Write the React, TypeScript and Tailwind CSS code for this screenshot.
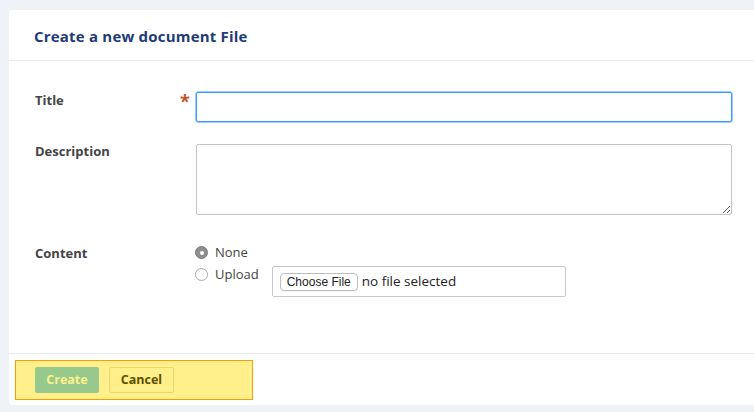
export default function App() {
  return (
    <div className="min-h-[412px] bg-[#eff3f8] pt-[10px] pl-[9px] pb-[7px] font-['Open_Sans',sans-serif]">
      <div className="bg-white rounded-tl-[4px] rounded-bl-[4px] h-[395px] flex flex-col">
        <div className="h-[51px] border-b border-[#e9ecef] flex items-center pl-[25px] pt-[3px]">
          <h1 className="text-[15px] font-bold text-[#1e3a78] tracking-[0.2px]">
            Create a new document File
          </h1>
        </div>

        <div className="flex-1 pt-[31px] pl-[26px] pr-[22px]">
          <div className="flex">
            <label className="w-[145px] -mt-[1px] text-[13px] font-bold text-[#444]">Title</label>
            <div className="w-[16px] text-[#c4531f] text-[18px] font-bold leading-none">*</div>
            <input
              autoFocus
              className="flex-1 h-[30px] border border-[#3d9bff] rounded-[2px] outline-none px-[6px] text-[13px] shadow-[0_0_0_0.5px_#3d9bff]"
            />
          </div>

          <div className="flex mt-[22px]">
            <label className="w-[161px] -mt-[2px] text-[13px] font-bold text-[#444]">Description</label>
            <textarea className="flex-1 h-[71px] border border-[#c4c4c4] rounded-[2px] outline-none px-[6px] text-[13px]" />
          </div>

          <div className="flex mt-[29px]">
            <label className="w-[160px] text-[13px] font-bold text-[#444]">Content</label>
            <div className="flex flex-col">
              <div className="flex items-center gap-[7px] h-[17px]">
                <span className="w-[13px] h-[13px] rounded-full bg-[#8e8e8e] border border-[#7a7a7a] flex items-center justify-center">
                  <span className="w-[4px] h-[4px] rounded-full bg-white" />
                </span>
                <span className="text-[13px] text-[#444]">None</span>
              </div>
              <div className="flex items-start mt-[5px]">
                <div className="flex items-center gap-[7px] h-[17px]">
                  <span className="w-[13px] h-[13px] rounded-full bg-white border border-[#a9a9a9]" />
                  <span className="text-[13px] text-[#444]">Upload</span>
                </div>
                <div className="ml-[13px] mt-[0px] w-[294px] h-[31px] border border-[#c8c8c8] rounded-[2px] flex items-center pl-[7px] gap-[4px]">
                  <span className="h-[18px] w-[78px] text-center border border-[#bdbdbd] rounded-[4px] bg-white text-[12px] leading-[16px] text-[#222] font-['Liberation_Sans',sans-serif] shadow-[0_1px_0_rgba(0,0,0,0.05)]">
                    Choose File
                  </span>
                  <span className="text-[13.5px] text-[#222]">no file selected</span>
                </div>
              </div>
            </div>
          </div>
        </div>

        <div className="h-[52px] border-t border-[#e9ecef] pt-[6px] pl-[6px]">
          <div className="w-[238px] h-[40px] bg-[#fff08c] border border-[#f5a000] flex items-center pl-[19px] gap-[10px]">
            <button className="h-[26px] w-[64px] rounded-[2px] bg-[#96c98b] text-[#fff08c] text-[12.5px] font-bold">
              Create
            </button>
            <button className="h-[26px] w-[65px] rounded-[2px] border border-[#e9d870] text-[#5a5000] text-[12.5px] font-bold">
              Cancel
            </button>
          </div>
        </div>
      </div>
    </div>
  );
}
